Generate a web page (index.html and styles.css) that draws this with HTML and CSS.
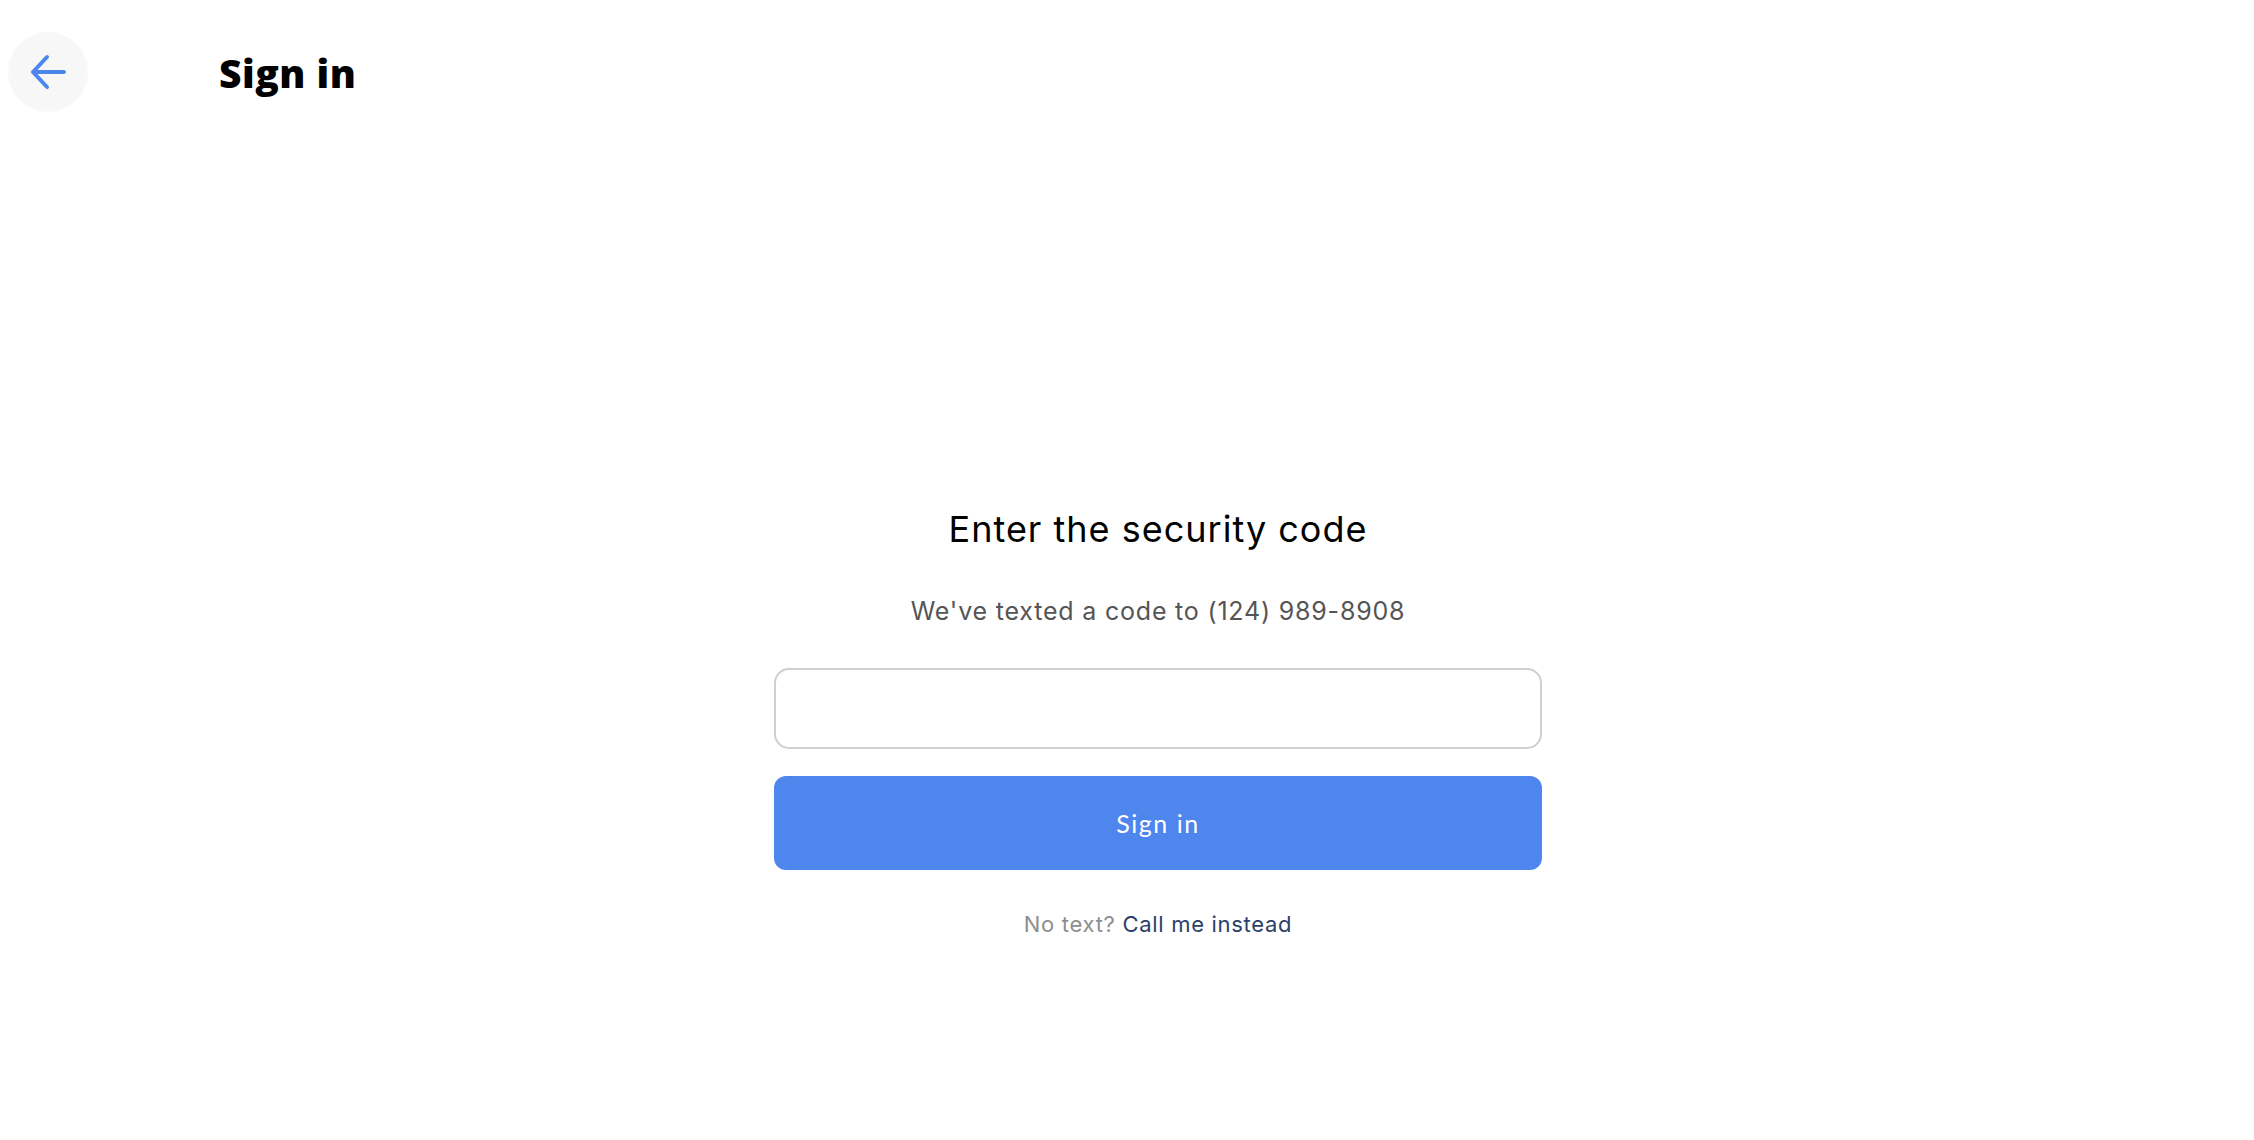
FILE: index.html
```html
<!DOCTYPE html>
<html lang="en">
<head>
    <meta charset="UTF-8">
    <meta name="viewport" content="width=device-width, initial-scale=1.0">
    <title>Sign in</title>
    <link rel="stylesheet" href="styles.css">
</head>
<body>
<header class="top-bar">
    <button class="back-btn" aria-label="Back">
        <svg width="36" height="36" viewBox="0 0 36 36" fill="none">
            <path d="M34 18H3M17 3L3 18l14 15" stroke="#4c86ec" stroke-width="4" stroke-linecap="round" stroke-linejoin="round"/>
        </svg>
    </button>
    <h1 class="page-title">Sign in</h1>
</header>

<main class="code-panel">
    <h2 class="code-title">Enter the security code</h2>
    <p class="code-sub">We've texted a code to (124) 989-8908</p>
    <input type="text" class="code-input" aria-label="Security code">
    <button class="submit-btn">Sign in</button>
    <p class="alt-line">No text? <a href="#" class="alt-link">Call me instead</a></p>
</main>
</body>
</html>
```

FILE: styles.css
```css
body {
    margin: 0;
    font-family: Inter, "Noto Sans", sans-serif;
    background-color: #ffffff;
    color: #111;
}

.top-bar {
    display: flex;
    align-items: center;
    gap: 131px;
    padding: 32px 0 0 8px;
}

.back-btn {
    width: 80px;
    height: 80px;
    border: none;
    border-radius: 50%;
    background-color: #f7f7f7;
    display: flex;
    align-items: center;
    justify-content: center;
    padding: 0;
    cursor: pointer;
}

.page-title {
    margin: 0;
    font-family: "Open Sans", sans-serif;
    font-size: 39px;
    font-weight: 800;
    letter-spacing: 0.5px;
    color: #000;
}

.code-panel {
    display: flex;
    flex-direction: column;
    align-items: center;
    padding-left: 62px;
    margin-top: 396px;
}

.code-title {
    margin: 0;
    font-size: 36px;
    line-height: 1.2;
    font-weight: 400;
    letter-spacing: 1px;
    color: #000;
}

.code-sub {
    margin: 45px 0 0;
    font-size: 25px;
    line-height: 1.2;
    letter-spacing: 0.8px;
    color: #555;
}

.code-input {
    box-sizing: border-box;
    width: 768px;
    height: 81px;
    margin-top: 42px;
    border: 2px solid #cfcfcf;
    border-radius: 15px;
    font-size: 24px;
    padding: 0 20px;
    outline: none;
}

.submit-btn {
    width: 768px;
    height: 94px;
    margin-top: 27px;
    border: none;
    border-radius: 12px;
    background-color: #4f86ed;
    color: #fff;
    font-family: Lato, sans-serif;
    font-size: 25px;
    letter-spacing: 1.5px;
    cursor: pointer;
}

.alt-line {
    margin: 41px 0 0;
    font-size: 22px;
    line-height: 1.2;
    letter-spacing: 0.7px;
    color: #8e8e8e;
}

.alt-link {
    color: #2c4169;
    text-decoration: none;
}
```
